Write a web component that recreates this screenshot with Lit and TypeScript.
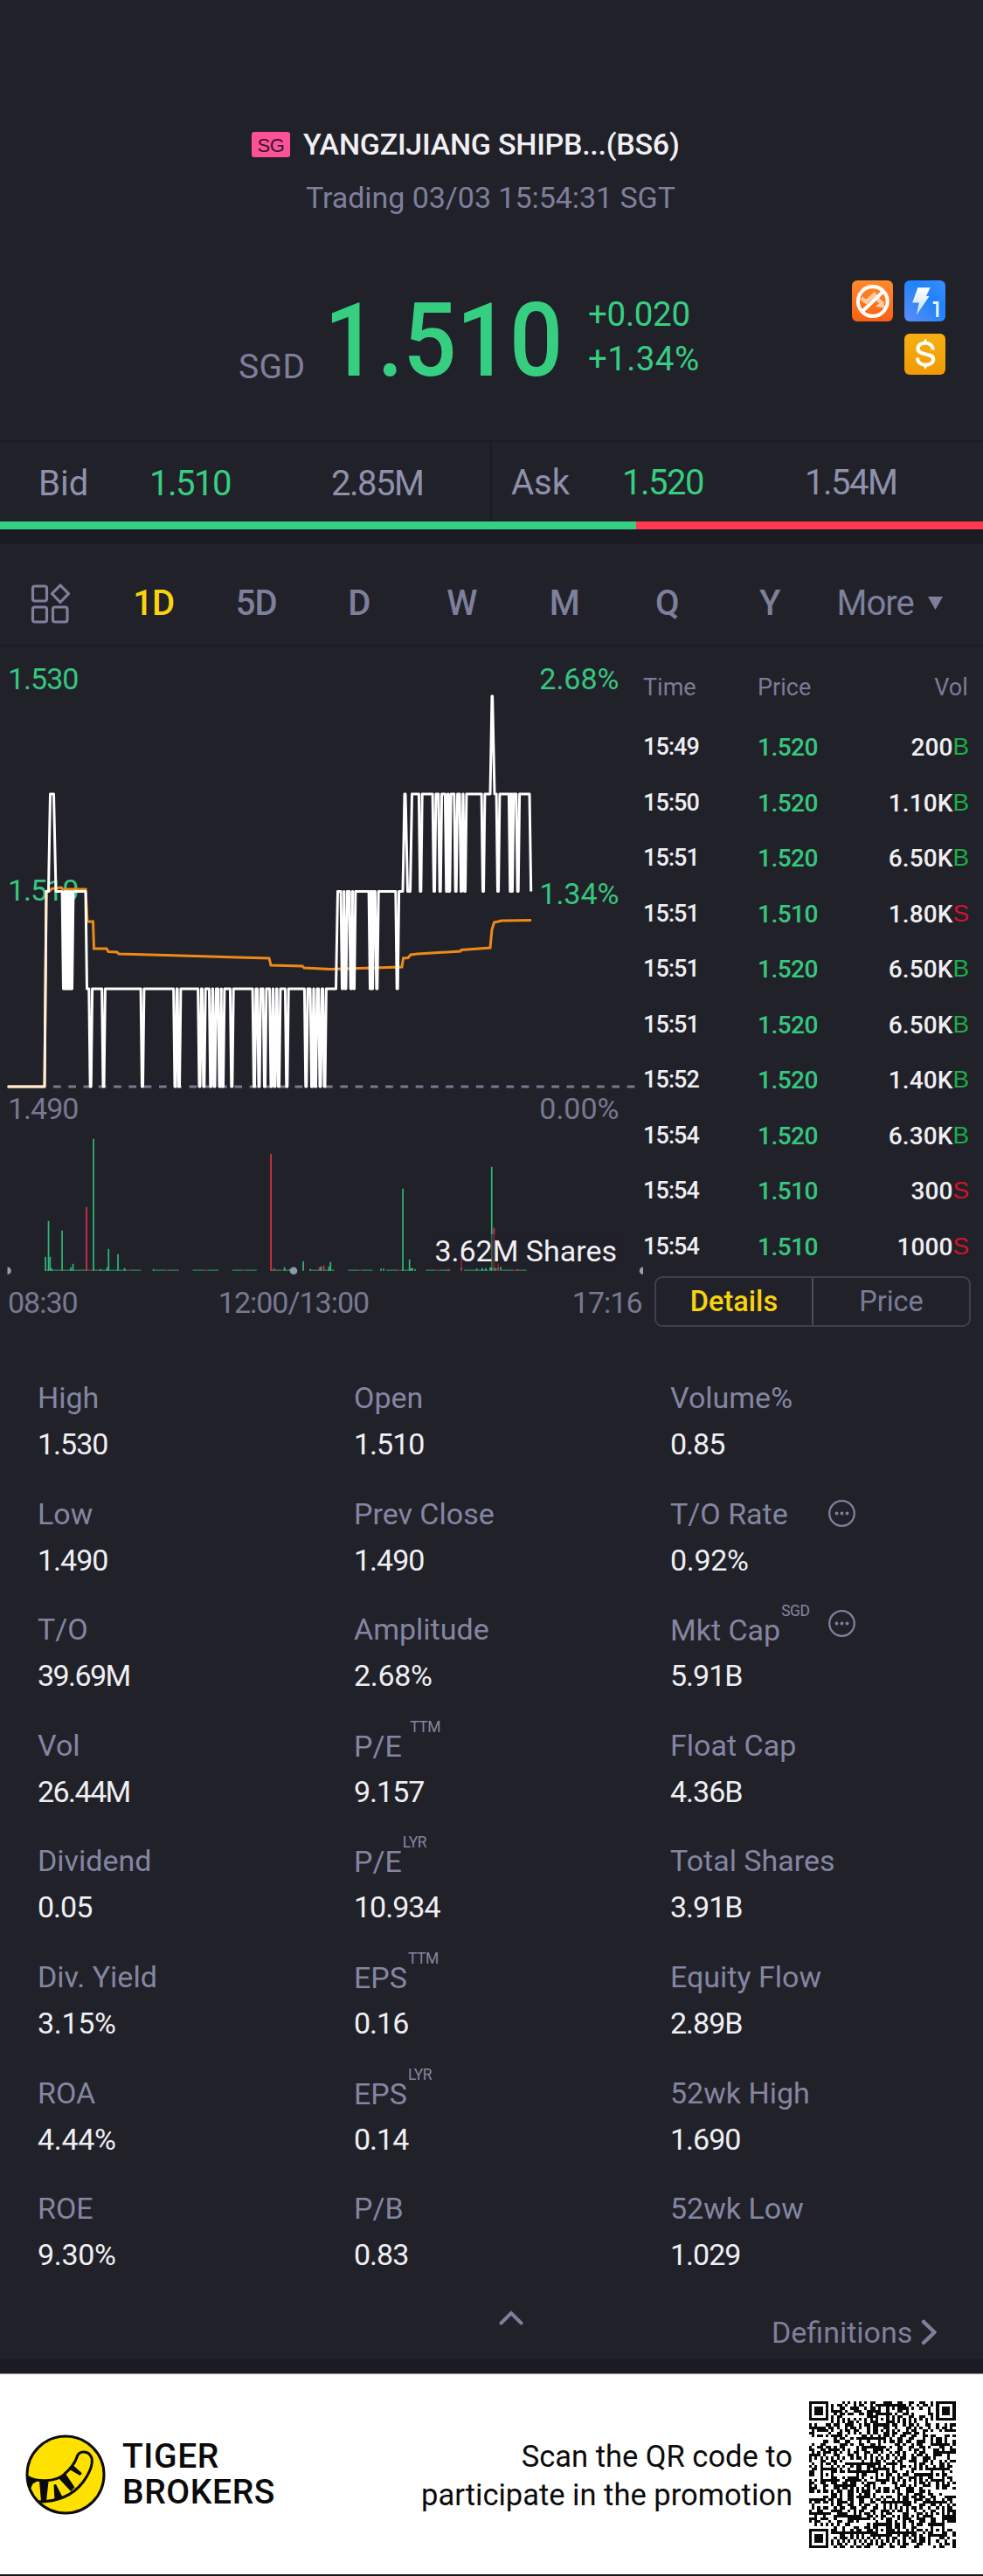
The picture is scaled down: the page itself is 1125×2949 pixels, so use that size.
import { LitElement, html, svg, css } from "lit";
import { customElement } from "lit/decorators.js";
import { classMap } from "lit/directives/class-map.js";

const base = css`
  :host { display: block; font-family: Roboto, "Liberation Sans", sans-serif; }
  * { box-sizing: border-box; }
  svg { display: block; flex: none; }
`;

@customElement("quote-header")
class QuoteHeader extends LitElement {
  static styles = [base, css`
    :host { height: 504px; padding-top: 143px; color: #7e809b; }
    .name { display: flex; align-items: center; height: 44px; padding-left: 288px; }
    .flag { width: 44px; height: 29px; margin-right: 15px; border-radius: 3px; background: #ff5098; color: #2b1c2a;
      font: 22px/32px "Liberation Sans", sans-serif; letter-spacing: -0.4px; text-align: center; }
    .title { color: #f0f0f2; font-size: 34px; font-weight: 500; letter-spacing: -0.25px; white-space: nowrap; }
    .status { height: 44px; margin-top: 17px; padding-left: 350px; font-size: 34px; line-height: 44px; letter-spacing: -0.05px; white-space: nowrap; }
    .quote { display: flex; margin-top: 68px; height: 150px; white-space: nowrap; }
    .ccy { width: 98px; margin-left: 273px; padding-top: 81px; font-size: 39px; line-height: 46px; letter-spacing: 0.4px; }
    .last { width: 302px; font-size: 116px; font-weight: 500; line-height: 148px; letter-spacing: -0.5px; color: #36cf82; transform: scaleX(0.93); transform-origin: 0 50%; }
    .chg { width: 302px; padding-top: 18px; font-size: 38.5px; line-height: 51px; color: #36cf82; letter-spacing: -0.3px; }
    .pct { letter-spacing: 0.4px; }
    .badges { display: grid; grid-template-columns: 47px 47px; gap: 14px 13px; padding-top: 5px; height: 112px; }
    .badges .coin { grid-column: 2; }
  `];
  render() {
    return html`
      <div class="name"><span class="flag">SG</span><span class="title">YANGZIJIANG SHIPB...(BS6)</span></div>
      <div class="status">Trading 03/03 15:54:31 SGT</div>
      <div class="quote">
        <div class="ccy">SGD</div>
        <div class="last">1.510</div>
        <div class="chg"><div>+0.020</div><div class="pct">+1.34%</div></div>
        <div class="badges">
          <svg width="47" height="47" viewBox="0 0 46 46">
            <defs><linearGradient id="o" x1="0" y1="0" x2="0" y2="1"><stop offset="0" stop-color="#ff8a2c"/><stop offset="1" stop-color="#fa6014"/></linearGradient></defs>
            <rect width="46" height="46" rx="6" fill="url(#o)"/>
            <path d="M10.500 20l5.500 4 9-8 8 10" fill="none" stroke="#ffc9a0" stroke-width="4.500"/>
            <path d="M26 29l9.500-6.500 1 8.500z" fill="#ffc9a0"/>
            <circle cx="23.300" cy="23.500" r="16.500" fill="none" stroke="#fff" stroke-width="4"/>
            <path d="M12 34.500L35 12.500" stroke="#fff" stroke-width="4"/>
          </svg>
          <svg width="47" height="47" viewBox="0 0 46 46">
            <defs><linearGradient id="b" x1="0" y1="1" x2="1" y2="0"><stop offset="0" stop-color="#5b8ff5"/><stop offset=".6" stop-color="#1f83fb"/><stop offset="1" stop-color="#3a90ff"/></linearGradient>
            <linearGradient id="l" x1="0" y1="0" x2="0" y2="1"><stop offset="0" stop-color="#fff"/><stop offset="1" stop-color="#c5dcfd"/></linearGradient></defs>
            <rect width="46" height="46" rx="6" fill="url(#b)"/>
            <path d="M15 8h14l-4.500 9.500h3.500L13.500 39l3-14H9z" fill="url(#l)"/>
            <path d="M32 25h5v16" fill="none" stroke="#eaf3ff" stroke-width="3"/>
          </svg>
          <svg class="coin" width="47" height="47" viewBox="0 0 46 46">
            <defs><linearGradient id="g" x1="0" y1="0" x2="0" y2="1"><stop offset="0" stop-color="#f6b012"/><stop offset="1" stop-color="#f09a05"/></linearGradient></defs>
            <rect width="46" height="46" rx="6" fill="url(#g)"/>
            <path d="M32 18c0-4.500-3.500-7.500-8.500-7.500s-8.300 2.500-8.300 6.300c0 8.200 17.300 4 17.300 11.700 0 4-3.500 6.500-8.800 6.500-5.500 0-9-3-9-8" fill="none" stroke="#fff" stroke-width="4"/>
            <path d="M21.500 10l2-3.500 2 3.500zM21.500 35.500l2 3.500 2-3.500z" fill="#fff" stroke="#fff"/>
          </svg>
        </div>
      </div>`;
  }
}

@customElement("bid-ask")
class BidAsk extends LitElement {
  static styles = [base, css`
    .row { display: flex; height: 93px; border-top: 2px solid #1b1b23; font-size: 40px; line-height: 96px; color: #8f91ab; white-space: nowrap; }
    .side { display: grid; }
    .bid { width: 563px; grid-template-columns: 127px 208px 1fr; padding-left: 44px; border-right: 2px solid #1b1b23; }
    .ask { flex: 1; grid-template-columns: 127px 209px 1fr; padding-left: 22px; line-height: 94px; }
    .n { letter-spacing: -1.5px; }
    .up { color: #36cf82; }
    .depth { display: flex; height: 9px; }
    .b { width: 728px; background: #36d083; }
    .a { flex: 1; background: #ff3a50; }
    .band { height: 17px; background: #1b1b23; }
  `];
  render() {
    return html`
      <div class="row">
        <div class="side bid"><span>Bid</span><span class="n up">1.510</span><span class="n">2.85M</span></div>
        <div class="side ask"><span>Ask</span><span class="n up">1.520</span><span class="n">1.54M</span></div>
      </div>
      <div class="depth"><div class="b"></div><div class="a"></div></div>
      <div class="band"></div>`;
  }
}

@customElement("period-tabs")
class PeriodTabs extends LitElement {
  static styles = [base, css`
    :host { height: 117px; border-bottom: 2px solid #1b1b23; }
    .tabs { display: flex; align-items: center; height: 117px; padding: 19px 0 0 35px; font-size: 40px; font-weight: 500; line-height: 44px; color: #7e809b; }
    .tab { width: 117.5px; text-align: center; letter-spacing: -1px; }
    .on { color: #f9d40d; }
    .apps { margin-right: 36px; }
    .more { display: flex; align-items: center; gap: 15px; margin-left: 18px; font-weight: 400; letter-spacing: -1px; }
  `];
  render() {
    return html`<div class="tabs">
      <svg class="apps" width="46" height="46" viewBox="0 0 46 46" fill="none" stroke="#7e809b" stroke-width="3.200">
        <rect x="2.500" y="3" width="16" height="17" rx="2.500"/><path d="M34 2l9.500 9.700L34 21.500l-9.500-9.800z" stroke-linejoin="round"/>
        <rect x="2.500" y="27" width="16" height="17" rx="2.500"/><rect x="25.500" y="27" width="16.500" height="17" rx="2.500"/>
      </svg>
      ${["1D", "5D", "D", "W", "M", "Q", "Y"].map((t) => html`<span class=${classMap({ tab: true, on: t === "1D" })}>${t}</span>`)}
      <span class="more">More<svg width="19" height="16" viewBox="0 0 19 16"><path d="M1 0h17L9.500 15z" fill="#7e809b"/></svg></span>
    </div>`;
  }
}

const Y: Record<string, number> = { a: 504, b: 392, c: 280.5, d: 169, e: 57 };

/* Each run holds one price level over [from, to] with brief visits to another level. */
const runs: [string, number, number, string, number[]][] = [
  ["c", 53, 55.5, "c", []],
  ["d", 57.5, 61.5, "d", []],
  ["c", 64, 98, "b", [73, 76, 79, 82]],
  ["b", 99.5, 384.500, "a", [103.700, 118.500, 163, 200.500, 205, 228.500, 233.300, 241.300, 245.500, 251.500, 255, 265.300, 291, 296.500, 303, 310.500, 314.500, 319, 328.300, 350.300, 357, 361, 366.500, 371.500]],
  ["c", 386.500, 461, "b", [392, 395.500, 401.700, 405, 424, 426, 431.300, 454.700]],
  ["d", 463, 464, "d", []],
  ["c", 466.500, 469.500, "c", []],
  ["d", 471.500, 561, "c", [481.300, 497, 503.700, 511.300, 514.300, 521.700, 528, 532, 553]],
  ["e", 563, 563.600, "e", []],
  ["d", 566, 606, "c", [570, 584.300, 586, 592.700]],
];

function pricePath(): string {
  const pts: string[] = [`8.700 ${Y.a}`, `51 ${Y.a}`];
  for (const [lvl, from, to, dip, xs] of runs) {
    pts.push(`${from} ${Y[lvl]}`);
    for (const x of xs) pts.push(`${x - 1.9} ${Y[lvl]}`, `${x - 0.5} ${Y[dip]}`, `${x + 0.5} ${Y[dip]}`, `${x + 1.9} ${Y[lvl]}`);
    pts.push(`${to} ${Y[lvl]}`);
  }
  pts.push(`607.700 ${Y.c}`);
  return "M" + pts.join("L");
}

const avg = "M8.700 504L51 504L53 281L57 280L59 277.500L70 276L72 278L98 278L100 315L106.500 315L107.500 346L122 346L124 349.500L134 350L136 352L190 353.500L308 357L310 365L346 366L348 368L378 369.500L460 367L461.500 357L467 356.500L470 353L478 352L527 349L528 347.500L561 345L563 324L565.500 316L574 314L608 313.500";

const bars: [number, number, number][] = [
  [52, 16, 1], [55.5, 57, 1], [57.300, 16, 1], [59, 3, 1], [71, 46, 1], [81, 4, 1], [83.500, 8, 1], [99, 73, 0], [107, 151, 1], [122.500, 4, 1],
  [124.200, 25, 1], [135, 19, 1], [142.500, 3, 1], [115, 2, 1], [175.500, 2, 1], [310, 134, 0], [313.500, 3, 0], [325.500, 4, 1], [332, 2, 1], [347, 11, 1], [355, 2, 1],
  [365.700, 4, 0], [367.300, 5, 1], [370.500, 6, 0], [376.500, 5, 1], [378.200, 10, 1], [436, 2.500, 1], [439, 2.500, 1], [461, 94, 1], [468.600, 13, 1],
  [470.500, 3, 1], [472, 3, 1], [475, 2, 1], [513, 2, 0], [528, 18, 0], [545.500, 2.500, 1], [552, 3, 1], [556, 3, 1], [561, 4, 1], [562.700, 119, 1],
  [565.300, 49, 0], [567.300, 3, 1], [570, 8, 0], [573, 5, 1], [592, 2, 0],
];

@customElement("intraday-chart")
class IntradayChart extends LitElement {
  static styles = [base, css`
    :host { width: 736px; }
    text { font-size: 34px; letter-spacing: -1px; }
    .up { fill: #36c77f; }
    .mute { fill: #777990; }
    .pct { letter-spacing: 0; }
    .vol { fill: #f1f1f3; letter-spacing: 0; }
  `];
  render() {
    const ticks: unknown[] = [];
    for (let x = 52; x < 606; x += 1.56) {
      const k = Math.round(x * 7.3) % 11;
      if (k > 3 || x < 140) ticks.push(svg`<rect x=${x} y="713.500" width="1.600" height="1.300" fill=${k === 7 ? "#96303f" : "#2a8b5d"}/>`);
    }
    return html`<svg width="736" height="790" viewBox="0 0 736 790">
      <text class="up" x="9" y="49">1.530</text><text class="up" x="9" y="291">1.510</text><text class="mute" x="9" y="540.500">1.490</text>
      <text class="up pct" x="708.500" y="49" text-anchor="end">2.68%</text><text class="up pct" x="708.500" y="294.500" text-anchor="end">1.34%</text><text class="mute pct" x="708.500" y="540.500" text-anchor="end">0.00%</text>
      <path d="M61 504H727" stroke="#77798f" stroke-width="3" stroke-dasharray="8.700 8.580"/>
      <path d=${avg} fill="none" stroke="#ee8a18" stroke-width="3"/>
      <path d=${pricePath()} fill="none" stroke="#fff" stroke-width="3" stroke-linejoin="round"/>
      <path d="M8.700 504H51L53 281" fill="none" stroke="#ffe9cf" stroke-width="2"/>
      ${ticks}
      ${bars.map(([x, h, up]) => svg`<rect x=${x - 0.8} y=${714.800 - h} width="1.700" height=${h} fill=${up ? "#2fb877" : "#d9354a"}/>`)}
      <rect x="496" y="673" width="212" height="38" fill="#21212a" opacity=".55"/>
      <text class="vol" x="706" y="704" text-anchor="end">3.62M Shares</text>
      <path d="M8.500 710.500a4.300 4.300 0 0 1 0 8.600zM736 710.500a4.300 4.300 0 0 0 0 8.600z" fill="#9a9cb2"/>
      <circle cx="336" cy="714.800" r="4.300" fill="#8b9aa6"/>
      <text class="mute" x="9" y="762.500">08:30</text><text class="mute" x="336" y="762.500" text-anchor="middle">12:00/13:00</text><text class="mute" x="734.500" y="762.500" text-anchor="end">17:16</text>
    </svg>`;
  }
}

const trades = [
  ["15:49", "1.520", "200", "B"], ["15:50", "1.520", "1.10K", "B"], ["15:51", "1.520", "6.50K", "B"], ["15:51", "1.510", "1.80K", "S"],
  ["15:51", "1.520", "6.50K", "B"], ["15:51", "1.520", "6.50K", "B"], ["15:52", "1.520", "1.40K", "B"], ["15:54", "1.520", "6.30K", "B"],
  ["15:54", "1.510", "300", "S"], ["15:54", "1.510", "1000", "S"],
];

@customElement("trade-list")
class TradeList extends LitElement {
  static styles = [base, css`
    :host { flex: 1; padding: 20px 15px 0 0; }
    .r { display: grid; grid-template-columns: 131px 90px 1fr; height: 63.5px; line-height: 63.5px; font-size: 28px; font-weight: 500; color: #efeff2; letter-spacing: -0.5px; }
    .h { height: 64px; font-size: 27px; font-weight: 400; color: #7a7c95; line-height: 54px; letter-spacing: 0; }
    .t { font-size: 27px; letter-spacing: -0.9px; }
    .h .t { letter-spacing: 0; }
    .p { color: #36c77f; }
    .h .p { color: inherit; }
    .v { display: flex; justify-content: flex-end; letter-spacing: 0.1px; }
    .h .v { padding-right: 3px; }
    .k { font: 28px/62px "Liberation Sans", sans-serif; width: 20.5px; letter-spacing: 0; }
    .B { color: #1aae45; }
    .S { color: #d3122f; }
    .seg { display: flex; width: 362px; height: 58px; margin: 2px 0 0 13px; border: 2px solid #3f4050; border-radius: 9px; font-size: 32.5px; line-height: 55px; text-align: center; color: #7a7c95; }
    .seg div { flex: 1; }
    .seg .on { color: #f9d40d; font-weight: 500; border-right: 2px solid #4b4c5d; }
  `];
  render() {
    return html`
      <div class="r h"><span class="t">Time</span><span class="p">Price</span><span class="v">Vol</span></div>
      ${trades.map(([t, p, v, k]) => html`<div class="r"><span class="t">${t}</span><span class="p">${p}</span><span class="v">${v}<span class="k ${k}">${k}</span></span></div>`)}
      <div class="seg"><div class="on">Details</div><div>Price</div></div>`;
  }
}

type Stat = [label: string, value: string, sup?: string, info?: boolean];
const stats: Stat[] = [
  ["High", "1.530"], ["Open", "1.510"], ["Volume%", "0.85"],
  ["Low", "1.490"], ["Prev Close", "1.490"], ["T/O Rate", "0.92%", "", true],
  ["T/O", "39.69M"], ["Amplitude", "2.68%"], ["Mkt Cap", "5.91B", "SGD", true],
  ["Vol", "26.44M"], ["P/E ", "9.157", "TTM"], ["Float Cap", "4.36B"],
  ["Dividend", "0.05"], ["P/E", "10.934", "LYR"], ["Total Shares", "3.91B"],
  ["Div. Yield", "3.15%"], ["EPS", "0.16", "TTM"], ["Equity Flow", "2.89B"],
  ["ROA", "4.44%"], ["EPS", "0.14", "LYR"], ["52wk High", "1.690"],
  ["ROE", "9.30%"], ["P/B", "0.83"], ["52wk Low", "1.029"],
];

@customElement("stat-grid")
class StatGrid extends LitElement {
  static styles = [base, css`
    :host { height: 1170px; padding: 43px 0 0 43px; }
    .grid { display: grid; grid-template-columns: 362px 362px 1fr; grid-auto-rows: 132.6px; font-size: 34px; white-space: nowrap; }
    .l { position: relative; display: flex; height: 54px; line-height: 54px; color: #8486a1; white-space: pre; }
    .l.s { padding-top: 1px; }
    sup { font-size: 17.5px; line-height: 20px; margin: -5px 0 0 1px; letter-spacing: -0.5px; }
    .ico { position: absolute; left: 180px; top: 10px; }
    .ico.hi { top: 4px; }
    .v { line-height: 53px; color: #efeff2; letter-spacing: -1px; }
    .v.pct { letter-spacing: -0.3px; }
    .v.mil { letter-spacing: -1.6px; }
    .foot { display: flex; height: 68px; color: #7e809b; font-size: 34px; letter-spacing: 0; }
    .up { margin: 9px 284px 0 528px; }
    .def { display: flex; gap: 10px; line-height: 73px; }
    .def svg { margin-top: 21px; }
  `];
  render() {
    return html`
      <div class="grid">${stats.map(([l, v, sup, info]) => html`<div>
        <div class=${classMap({ l: true, s: !!sup })}><span>${l}</span>${sup ? html`<sup>${sup}</sup>` : ""}${info ? html`<svg class=${classMap({ ico: true, hi: !!sup })} width="33" height="33" viewBox="0 0 33 33"><circle cx="16.500" cy="16.500" r="14.300" fill="none" stroke="#7e809b" stroke-width="2.300"/><g fill="#7e809b"><circle cx="10.500" cy="16.500" r="1.900"/><circle cx="16.500" cy="16.500" r="1.900"/><circle cx="22.500" cy="16.500" r="1.900"/></g></svg>` : ""}</div>
        <div class=${classMap({ v: true, pct: v.endsWith("%"), mil: v.endsWith("M") })}>${v}</div></div>`)}</div>
      <div class="foot">
        <svg class="up" width="28" height="20" viewBox="0 0 28 20"><path d="M2.500 16.500L14 5l11.500 11.500" fill="none" stroke="#7e809b" stroke-width="4" stroke-linecap="round"/></svg>
        <div class="def">Definitions<svg width="20" height="30" viewBox="0 0 20 30"><path d="M3 3l12.500 12L3 27" fill="none" stroke="#7e809b" stroke-width="4.500" stroke-linecap="round" stroke-linejoin="round"/></svg></div>
      </div>`;
  }
}

function qrPath(): string {
  const n = 53;
  let seed = 90817;
  const rnd = () => ((seed = (seed * 1103515245 + 12345) & 0x7fffffff) >> 12) & 1;
  const ring = (x: number, y: number, cx: number, cy: number) => Math.max(Math.abs(x - cx), Math.abs(y - cy));
  const eyes = [[3, 3], [n - 4, 3], [3, n - 4]];
  const marks = [[26, 6], [6, 26], [26, 26], [46, 26], [26, 46], [46, 46]];
  let d = "";
  for (let y = 0; y < n; y++) for (let x = 0; x < n; x++) {
    let on = rnd() === 1;
    if (x === 6) on = y % 2 === 0;
    if (y === 6) on = x % 2 === 0;
    for (const [a, b] of marks) { const r = ring(x, y, a, b); if (r <= 2) on = r !== 1; }
    for (const [a, b] of eyes) { const r = ring(x, y, a, b); if (r <= 4) on = r !== 2 && r !== 4; }
    if (on) d += `M${x} ${y}h1v1h-1z`;
  }
  return d;
}

@customElement("promo-footer")
class PromoFooter extends LitElement {
  static styles = [base, css`
    :host { height: 232px; background: #fff; color: #0b0b0c; border-top: 1px solid #8d8d91; border-bottom: 2px solid #16161a; }
    .row { display: flex; align-items: center; height: 229px; padding-left: 29px; }
    .brand { flex: none; width: 200px; margin-left: 19px; font-size: 39px; line-height: 41px; font-weight: 500; letter-spacing: 0.6px; }
    .scan { flex: none; width: 508px; margin-left: 59px; padding-top: 4px; text-align: right; font-size: 34.5px; line-height: 43.5px; letter-spacing: 0; white-space: nowrap; }
    .qr { margin-left: 19px; }
  `];
  render() {
    return html`<div class="row">
      <svg width="92" height="92" viewBox="-0.500 -0.500 92 92">
        <circle cx="45.500" cy="45.500" r="44" fill="#ffe100" stroke="#0b0b0c" stroke-width="3"/>
        <path d="M1.500 47.500C12 54 34 54.500 44 45C52 38 56 33 58.500 25.500C60.500 17.500 72 17 75.500 26.500C77 34 72 45 65.500 54C54 69 36 76.500 14.500 76.500" fill="none" stroke="#0b0b0c" stroke-width="3"/>
        <path d="M1.500 47.500L14 52.500L8 56L5 63L1.500 54zM15.500 52.500L26 53.500L23.500 76H17.500zM32 57L34.500 56.500L42 71L33 75zM37.500 49.500L46 45L56 60L51.500 64.500zM50 39.500L54.500 35L64.500 44L62 46.500z" fill="#0b0b0c"/>
      </svg>
      <div class="brand">TIGER<br>BROKERS</div>
      <div class="scan">Scan the QR code to<br>participate in the promotion</div>
      <svg class="qr" width="167.500" height="168" viewBox="0 0 53 53" preserveAspectRatio="none" shape-rendering="crispEdges"><path d=${qrPath()} fill="#0a0a0a"/></svg>
    </div>`;
  }
}

@customElement("app-root")
class AppRoot extends LitElement {
  static styles = [base, css`
    :host { width: 1125px; height: 2949px; background: #21212a; overflow: hidden; }
    .main { display: flex; height: 790px; }
    .band { height: 17px; background: #1b1b23; }
  `];
  render() {
    return html`
      <quote-header></quote-header>
      <bid-ask></bid-ask>
      <period-tabs></period-tabs>
      <div class="main"><intraday-chart></intraday-chart><trade-list></trade-list></div>
      <stat-grid></stat-grid>
      <div class="band"></div>
      <promo-footer></promo-footer>`;
  }
}
